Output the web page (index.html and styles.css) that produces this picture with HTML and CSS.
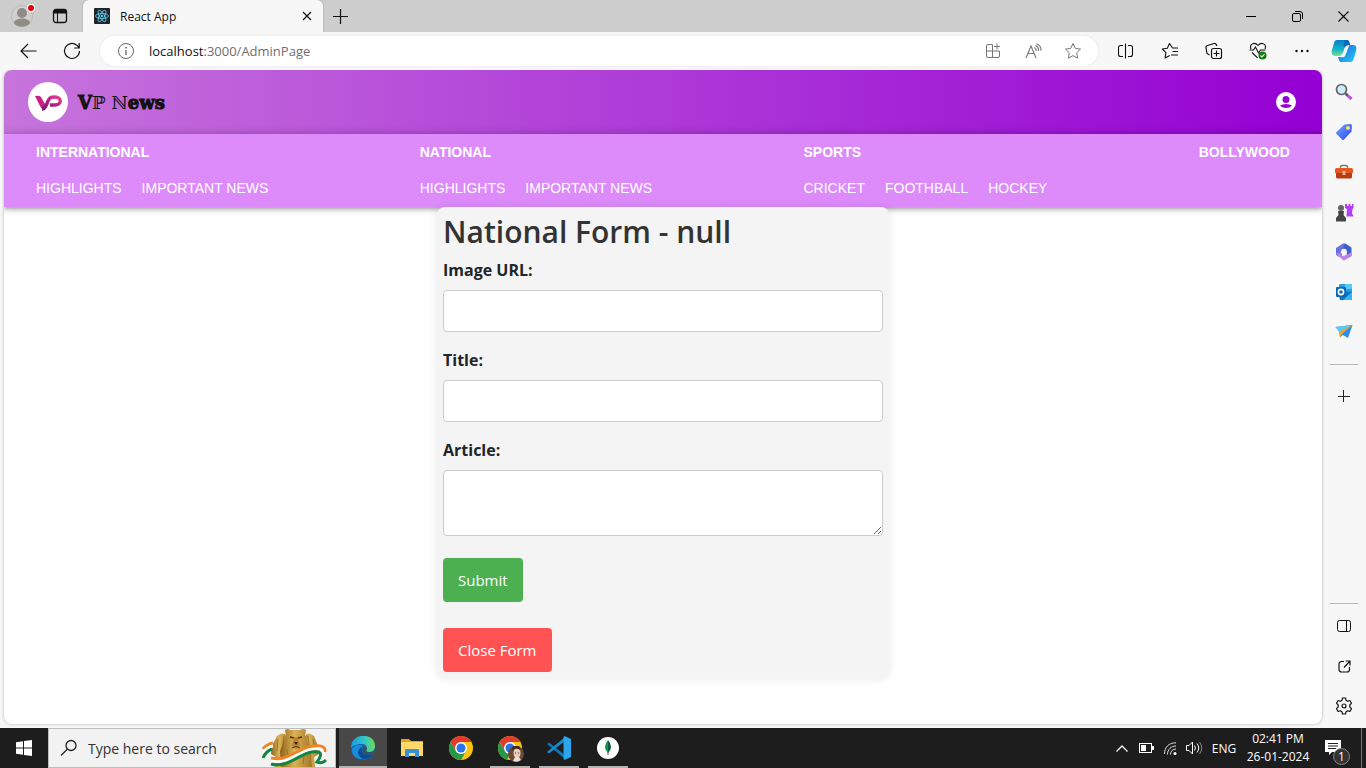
FILE: index.html
```html
<!DOCTYPE html>
<html lang="en">
<head>
<meta charset="utf-8">
<title>React App</title>
<link rel="stylesheet" href="styles.css">
</head>
<body>
<div class="tabstrip">
  <button class="profile" aria-label="Profile">
    <svg width="26" height="26" viewBox="0 0 26 26"><circle cx="13" cy="13" r="10.5" fill="#d2d0ce" stroke="#bdbab6"/><circle cx="13" cy="10" r="5" fill="#8f8b87"/><path d="M5 20c0-6 16-6 16 0-3 5-13 5-16 0z" fill="#8f8b87"/><circle cx="22" cy="5" r="4" fill="#fff"/><circle cx="22" cy="5" r="3" fill="#e3000b"/></svg>
  </button>
  <button class="workspace" aria-label="Tab actions">
    <svg width="16" height="16" viewBox="0 0 16 16"><rect x="1.500" y="1.500" width="13" height="13" rx="2.500" fill="none" stroke="#111" stroke-width="1.300"/><path d="M2 2h12v3.500H2z" fill="#111"/><path d="M5.500 5v9" stroke="#111"/></svg>
  </button>
  <div class="tab">
    <svg width="16" height="16" viewBox="0 0 16 16"><rect width="16" height="16" rx="1" fill="#20232a"/><g fill="none" stroke="#61dafb" stroke-width=".8"><ellipse cx="8" cy="8" rx="6.500" ry="2.500"/><ellipse cx="8" cy="8" rx="6.500" ry="2.500" transform="rotate(60 8 8)"/><ellipse cx="8" cy="8" rx="6.500" ry="2.500" transform="rotate(120 8 8)"/></g><circle cx="8" cy="8" r="1.200" fill="#61dafb"/></svg>
    <span class="tab-title">React App</span>
    <button class="tab-close" aria-label="Close tab"><svg width="10" height="10" viewBox="0 0 10 10"><path d="M1 1l8 8M9 1l-8 8" stroke="#111" stroke-width="1.300"/></svg></button>
  </div>
  <button class="new-tab" aria-label="New tab"><svg width="15" height="15" viewBox="0 0 15 15"><path d="M7.500 0v15M0 7.500h15" stroke="#111" stroke-width="1.200"/></svg></button>
  <div class="window-controls">
    <button aria-label="Minimize"><svg width="10" height="10" viewBox="0 0 10 10"><path d="M0 5.500h10" stroke="#000"/></svg></button>
    <button aria-label="Restore"><svg width="11" height="11" viewBox="0 0 11 11" fill="none" stroke="#000"><rect x=".5" y="2.500" width="8" height="8" rx="1.500"/><path d="M3 .5h5a2.500 2.500 0 0 1 2.500 2.500v5"/></svg></button>
    <button aria-label="Close"><svg width="11" height="11" viewBox="0 0 11 11"><path d="M.5.5l10 10M10.500.5l-10 10" stroke="#000" stroke-width="1.100"/></svg></button>
  </div>
</div>

<div class="toolbar">
  <button class="tool" aria-label="Back"><svg width="17" height="16" viewBox="0 0 17 16" fill="none" stroke="#111" stroke-width="1.200"><path d="M16.500 8H1M8 1L1 8l7 7"/></svg></button>
  <button class="tool" aria-label="Refresh"><svg width="18" height="18" viewBox="0 0 18 18" fill="none" stroke="#111" stroke-width="1.200"><path d="M16.500 9A7.500 7.500 0 1 1 13.800 3.200L16 5.500M16.200 1v5h-5"/></svg></button>
  <div class="address">
    <button class="site-info" aria-label="Site information"><svg width="18" height="18" viewBox="0 0 18 18"><circle cx="9" cy="9" r="7.500" fill="none" stroke="#666"/><path d="M9 8v5" stroke="#666" stroke-width="1.300"/><circle cx="9" cy="5.700" r=".9" fill="#666"/></svg></button>
    <span class="url"><span class="host">localhost</span>:3000/AdminPage</span>
    <button class="addr-btn" aria-label="Apps"><svg width="16" height="16" viewBox="0 0 16 16" fill="none" stroke="#767676"><path d="M7.500 1.500H3A1.500 1.500 0 0 0 1.500 3v10A1.500 1.500 0 0 0 3 14.500h10a1.500 1.500 0 0 0 1.500-1.500V8H1.500M7.500 1.500v13M12 .5v6M9 3.500h6"/></svg></button>
    <button class="addr-btn" aria-label="Read aloud"><svg width="17" height="16" viewBox="0 0 17 16" fill="none" stroke="#767676" stroke-width="1.100"><path d="M1 15L6 3l5 12M3 10.500h6M9.500 4.500q2 1 1.500 3.500M10.500 2.500q3.500 1.500 3 5.500M11.500 .8q5 2 4.500 7"/></svg></button>
    <button class="addr-btn" aria-label="Add favourite"><svg width="18" height="18" viewBox="0 0 18 18" fill="none" stroke="#767676" stroke-linejoin="round"><path d="M9 1.500l2.300 4.900 5.200.7-3.800 3.700 1 5.400L9 13.600l-4.700 2.600 1-5.400L1.500 7.100l5.200-.7z"/></svg></button>
  </div>
  <button class="tool" aria-label="Split screen"><svg width="16" height="16" viewBox="0 0 16 16" fill="none" stroke="#111" stroke-width="1.100"><path d="M7.500 .5v15M5 2.500H2.500A2 2 0 0 0 .5 4.500v7a2 2 0 0 0 2 2H5M10 2.500h2.500a2 2 0 0 1 2 2v7a2 2 0 0 1-2 2H10"/></svg></button>
  <button class="tool" aria-label="Favourites"><svg width="18" height="18" viewBox="0 0 18 18" fill="none" stroke="#111" stroke-width="1.100" stroke-linejoin="round"><path d="M17 6h-5.500L8.500 1.500 6.300 6.200l-5 .8 3.600 3.600-.8 5.400 4.600-2.500M11.500 9.500H17M10 13h7"/></svg></button>
  <button class="tool" aria-label="Collections"><svg width="18" height="18" viewBox="0 0 18 18" fill="none" stroke="#111" stroke-width="1.200"><rect x="6.500" y="6.500" width="10" height="10" rx="2"/><path d="M11.500 8.500v6M8.500 11.500h6M4.500 13L2 11.500 1 6a2 2 0 0 1 1.500-2.500L9 1.500a2 2 0 0 1 2.500 1.500L12 4"/></svg></button>
  <button class="tool" aria-label="Browser essentials"><svg width="18" height="18" viewBox="0 0 18 18" fill="none" stroke="#111" stroke-width="1.100"><path d="M2 7C0 2 5.500-.5 9 3.500 12.500-.5 18 2 16 7M.5 8h4l2-3 3 6 2-3h5M3 10.500l5.500 5.300"/><circle cx="13.500" cy="13.500" r="4" fill="#107c10" stroke="none"/><path d="M11.500 13.500l1.500 1.500 2.500-3" stroke="#fff"/></svg></button>
  <button class="tool" aria-label="Settings and more"><svg width="14" height="4" viewBox="0 0 14 4" fill="#111"><circle cx="1.500" cy="2" r="1.200"/><circle cx="7" cy="2" r="1.200"/><circle cx="12.500" cy="2" r="1.200"/></svg></button>
  <button class="copilot" aria-label="Copilot"><svg width="26" height="24" viewBox="0 0 26 24">
    <defs><linearGradient id="ca" x1="0" y1="0" x2="0" y2="1"><stop stop-color="#087ed0"/><stop offset=".6" stop-color="#15b8c5"/><stop offset="1" stop-color="#82dc92"/></linearGradient><linearGradient id="cb" x1="0" y1="0" x2="1" y2="1"><stop stop-color="#1667d9"/><stop offset="1" stop-color="#28cbfa"/></linearGradient></defs>
    <path d="M7 1h9q2 0 2.500 3L19 6c-4 0-5 1-6 5-2 5-3 6-6 6H4c-3 0-4-3-3-6l2-7c1-3 2-3 4-3z" fill="url(#ca)"/><path d="M14 1h2q2 0 2.500 3L19 6c-4 0-5 1-6 3-1-4 0-6 1-8z" fill="#0869b4"/><path d="M10 23h9c2 0 3-1 4-4l2-7c1-4 0-6-3-6h-3c-1 0-2 1-3 5-2 6-3 7-6 7H7c1 3 1 5 3 5z" fill="url(#cb)"/><path d="M16 7h2l-4 10q-1 2-4 1 2-1 3-5 1-5 3-6z" fill="#f7f7f7"/></svg></button>
</div>

<div class="workarea">
  <div class="page">
    <header class="site-header">
      <a class="brand" href="#">
        <svg width="40" height="40" viewBox="0 0 40 40"><defs><linearGradient id="vp" x1="0" y1="1" x2="1" y2="0"><stop stop-color="#6f1b6d"/><stop offset=".5" stop-color="#b31e84"/><stop offset="1" stop-color="#e8428e"/></linearGradient></defs><circle cx="20" cy="20" r="20" fill="#fff"/><path d="M7 14q4-1 6 1l4 7 1 5q-4 1-6-3z" fill="#c91f88"/><path d="M14 27c4 0 4-4 6-8s3-4 7-4c7 0 7 8 0 8h-5" fill="none" stroke="url(#vp)" stroke-width="3.500"/></svg>
        <span><b>𝕍</b>ℙ ℕ<b>𝕖𝕨𝕤</b></span>
      </a>
      <button class="account" aria-label="Account"><svg width="24" height="24" viewBox="0 0 24 24" fill="#fff"><path d="M12 2a10 10 0 1 0 0 20 10 10 0 0 0 0-20zm0 4a3.500 3.500 0 1 1 0 7 3.500 3.500 0 0 1 0-7zm0 12c-2.500 0-4.700-1-6-2.500C7.500 14.800 9.600 14 12 14s4.500.8 6 1.500A8 8 0 0 1 12 18z"/></svg></button>
    </header>
    <nav class="site-nav">
      <section><a class="topic" href="#">INTERNATIONAL</a><div class="links"><a href="#">HIGHLIGHTS</a><a href="#">IMPORTANT NEWS</a></div></section>
      <section><a class="topic" href="#">NATIONAL</a><div class="links"><a href="#">HIGHLIGHTS</a><a href="#">IMPORTANT NEWS</a></div></section>
      <section><a class="topic" href="#">SPORTS</a><div class="links"><a href="#">CRICKET</a><a href="#">FOOTHBALL</a><a href="#">HOCKEY</a></div></section>
      <section><a class="topic" href="#">BOLLYWOOD</a></section>
    </nav>
    <form class="article-form">
      <h1>National Form - null</h1>
      <label for="image">Image URL:</label>
      <input id="image" type="text">
      <label for="title">Title:</label>
      <input id="title" type="text">
      <label for="article">Article:</label>
      <textarea id="article"></textarea>
      <button class="submit" type="submit">Submit</button>
      <button class="close" type="button">Close Form</button>
    </form>
  </div>
  <aside class="sidebar">
    <button aria-label="Search"><svg width="18" height="18" viewBox="0 0 18 18"><path d="M11 11l5.500 5" stroke="#b84af0" stroke-width="3"/><path d="M10 10l2.500 2.500" stroke="#555" stroke-width="2"/><circle cx="6.500" cy="6.500" r="5" fill="#cdeafa" stroke="#666" stroke-width="1.700"/></svg></button>
    <button aria-label="Shopping"><svg width="18" height="18" viewBox="0 0 18 18"><defs><linearGradient id="tg" x1="0" y1="0" x2="1" y2="1"><stop stop-color="#6aaeff"/><stop offset="1" stop-color="#3340ee"/></linearGradient></defs><path d="M9.500 1.500L15.500 1q1.500 0 1.500 1.500l-.5 6-7.500 8q-1 1-2 0L1.500 11q-1-1 0-2z" fill="url(#tg)"/><circle cx="13" cy="5" r="2" fill="#ffd43b"/><circle cx="13" cy="5" r=".8" fill="#fff"/></svg></button>
    <button aria-label="Tools"><svg width="18" height="16" viewBox="0 0 18 16"><path d="M5.500 5V3q0-1.500 1.500-1.500h4q1.500 0 1.500 1.500v2" fill="none" stroke="#777" stroke-width="1.500"/><rect y="4" width="18" height="5.500" rx="1.500" fill="#e35b20"/><path d="M1 9h16v4q0 1.500-1.500 1.500h-13Q1 14.500 1 13z" fill="#b93b10"/><rect x="7.500" y="7" width="3" height="4" fill="#e9b09a"/></svg></button>
    <button aria-label="Games"><svg width="19" height="19" viewBox="0 0 19 19"><path d="M10 1h2v2h1.500V1h2v2H17V1h1.500v4l-1 1-.5 4 1.500 3.500h-7L12 6l-2-1z" fill="#b43df7"/><circle cx="6" cy="5" r="3" fill="#666"/><path d="M3 8h6l-.5 4 2.500 3v3.500H1V15l2.500-3z" fill="#444"/></svg></button>
    <button aria-label="Microsoft 365"><svg width="18" height="18" viewBox="0 0 18 18"><path d="M8 .5L1 5v7l3 2 3-2V8l3-2.500L14 3 10 .5z" fill="#6872dc"/><path d="M10 .5l6.500 4V13L12 15.500 11.500 7 8 4.500z" fill="#3c62c9"/><path d="M1 11l7 6q1 .5 2 0l6.500-4V9l-5 3-4 1-3.500-3z" fill="#b985e7"/><path d="M7 6l4 .5 1 3.500-3 2-3.500-2z" fill="#f7f7f7"/></svg></button>
    <button aria-label="Outlook"><svg width="18" height="18" viewBox="0 0 18 18"><rect x="4" y="1" width="13" height="9" rx="1" fill="#2a9fe0"/><path d="M10 1h6q1 0 1 1v4h-7z" fill="#57ccf8"/><path d="M3 8l14 1v7q0 1-1 1H5z" fill="#0a74c5"/><path d="M8 17l9-8v7q0 1-1 1z" fill="#35b8f1"/><rect x="1" y="4" width="10" height="10" rx="1" fill="#0867b3"/><circle cx="6" cy="9" r="2.600" fill="none" stroke="#fff" stroke-width="1.600"/></svg></button>
    <button aria-label="Drop"><svg width="18" height="16" viewBox="0 0 18 16"><path d="M.5 3L17.500 1 13 14l-5-3-3 2-.5-5z" fill="#2c8de4"/><path d="M.5 3L17.500 1 4.500 8z" fill="#5bcaf1"/><path d="M17.500 1L7 10l-2 4-1-6z" fill="#f0a329"/></svg></button>
    <hr>
    <button aria-label="Customize"><svg width="12" height="12" viewBox="0 0 12 12"><path d="M5.500 0v12M0 6.500h12" stroke="#222"/></svg></button>
    <div class="spacer"></div>
    <hr class="lower">
    <button aria-label="Hide sidebar"><svg width="14" height="12" viewBox="0 0 14 12" fill="none" stroke="#111"><rect x=".5" y=".5" width="13" height="11" rx="2"/><path d="M9.500 1v10"/></svg></button>
    <button aria-label="Open link"><svg width="13" height="13" viewBox="0 0 13 13" fill="none" stroke="#111" stroke-width="1.200"><path d="M6 1.500H3.500a2.500 2.500 0 0 0-2.500 2.500v5.500A2.500 2.500 0 0 0 3.500 12H9a2.500 2.500 0 0 0 2.500-2.500V7M7.500 1H12v4.500M12 1L6 7.500"/></svg></button>
    <button aria-label="Settings"><svg width="18" height="18" viewBox="0 0 18 18" fill="none" stroke="#111" stroke-linejoin="round" stroke-width="1.200"><circle cx="9" cy="9" r="2"/><path d="M7.500 1h3l.6 2.300 1.500.9 2.300-.7 1.600 2.700L14.800 8v2l1.700 1.700-1.600 2.800-2.300-.7-1.500.9-.6 2.300h-3l-.6-2.300-1.500-.9-2.300.7-1.600-2.800L3.200 10V8L1.500 6.200l1.600-2.700 2.300.7 1.500-.9z"/></svg></button>
  </aside>
</div>

<footer class="taskbar">
  <button class="start" aria-label="Start"><svg width="16" height="16" viewBox="0 0 16 16" fill="#fff"><path d="M0 2.200l7-1v6.300H0zM8 1l8-1v7.500H8zM0 8.500h7v6.300l-7-1zM8 8.500h8V16l-8-1z"/></svg></button>
  <div class="search">
    <svg width="18" height="18" viewBox="0 0 18 18" fill="none" stroke="#222" stroke-width="1.300"><circle cx="11" cy="6.500" r="5"/><path d="M7.500 10L1 16.500"/></svg>
    <input type="text" aria-label="Search" placeholder="Type here to search">
    <svg class="emblem" width="68" height="38" viewBox="0 0 68 38">
      <defs><linearGradient id="gold"><stop stop-color="#8a6420"/><stop offset=".45" stop-color="#dcb254"/><stop offset="1" stop-color="#a2772a"/></linearGradient></defs>
      <path d="M16 7q6-5 10 0l2 31H14l1-10-5-3 1-8z" fill="url(#gold)"/>
      <path d="M53 7q-6-5-9 0l-3 31h13l-1-10 5-3-1-8z" fill="url(#gold)"/>
      <path d="M24 1q3-2 5 0h10q3-2 6 0l-1 6 6 15 1 16H20l-1-16 6-15z" fill="url(#gold)"/>
      <path d="M29 8l4 1M41 8l-4 1" stroke="#4e300d" stroke-width="1.500"/>
      <path d="M33 8h4l2 9-4 3-4-3z" fill="#b9832f"/>
      <path d="M33 13h4l-2 3z" fill="#3a210a"/><path d="M31 19q4-3 8 0" fill="none" stroke="#5c390b"/>
      <path d="M26 20l2 15M44 20l-2 15M17 10l-1 12M52 10l2 12M23 7l-2 16M47 7l2 16" stroke="#8c6119" opacity=".7"/>
      <path d="M2 20q4-5 10-6" fill="none" stroke="#f58220" stroke-width="3"/>
      <path d="M2 24q4-6 10-7" fill="none" stroke="#fff" stroke-width="3"/>
      <path d="M2 29q3-7 9-9" fill="none" stroke="#128543" stroke-width="3"/>
      <path d="M10 29C29 34 41 14 59 17q6 1 5 6" fill="none" stroke="#f58220" stroke-width="3"/>
      <path d="M10 32C29 37 41 17 59 20q5 2 0 8" fill="none" stroke="#fff" stroke-width="3"/>
      <path d="M10 35C29 40 41 20 58 23q4 2-2 10 5 2 9-2" fill="none" stroke="#128543" stroke-width="3"/>
    </svg>
  </div>
  <div class="apps">
    <button class="active" aria-label="Edge"><svg width="24" height="24" viewBox="0 0 24 24"><defs><linearGradient id="ed" x1="0" x2="1"><stop stop-color="#159ee4"/><stop offset=".6" stop-color="#35c7c0"/><stop offset="1" stop-color="#6edb54"/></linearGradient></defs><circle cx="12" cy="12" r="12" fill="#0d64b4"/><path d="M0 12C0-4 24-4 24 10c0 6-6 7-9 5 2-4 0-7-4-7C5 8 1 10 0 12z" fill="url(#ed)"/><path d="M1 13c3-5 10-6 11-1-4 2-3 8 2 10-7 3-14-2-13-9z" fill="#198bdb"/><path d="M12 11c-4 5 3 11 10 7-4 7-14 6-15-1 0-3 2-6 5-6z" fill="#0a4d91"/><path d="M14 10q3 2 1 5 3 3 8 0-1 2-2 3-9 2-9-5 0-2 2-3z" fill="#494949"/></svg></button>
    <button aria-label="File Explorer"><svg width="22" height="20" viewBox="0 0 22 20"><path d="M0 1h8l2 2h12v15H0z" fill="#e8a317"/><path d="M0 4h22v14H0z" fill="#ffda6a"/><path d="M4 19v-7q0-1 1-1h12q1 0 1 1v7h-4v-4H8v4z" fill="#3a91d5"/></svg></button>
    <button aria-label="Chrome"><svg width="24" height="24" viewBox="0 0 24 24"><circle cx="12" cy="12" r="12" fill="#f9c513"/><path d="M1.600 6A12 12 0 0 1 22.400 6H12L6.800 15z" fill="#e33b2e"/><path d="M1.600 6l5.200 9 5.200 3-3 5.600A12 12 0 0 1 1.600 6z" fill="#24984a"/><path d="M12 18l5-3-5 9a12 12 0 0 1-3-.4z" fill="#24984a"/><circle cx="12" cy="12" r="6" fill="#fff"/><circle cx="12" cy="12" r="4.500" fill="#2874e8"/></svg></button>
    <button class="open" aria-label="Chrome profile"><svg width="28" height="28" viewBox="0 0 28 28"><circle cx="14" cy="14" r="12" fill="#f9c513"/><path d="M3.600 8A12 12 0 0 1 24.400 8H14L8.800 17z" fill="#e33b2e"/><path d="M3.600 8l5.200 9 5.200 3-3 5.600A12 12 0 0 1 3.600 8z" fill="#24984a"/><circle cx="14" cy="14" r="6" fill="#fff"/><circle cx="14" cy="14" r="4.500" fill="#2874e8"/><circle cx="20" cy="20" r="8" fill="#6b4a35"/><ellipse cx="21" cy="19" rx="3.500" ry="4.500" fill="#edcdbb"/><path d="M15 18q3-6 10-2l-2-4h-6z" fill="#3e2a20"/><path d="M17 27l2-4h4l2 3q-4 3-8 1z" fill="#e8dfda"/><path d="M19 19h1M22 19h1" stroke="#222"/></svg></button>
    <button class="open" aria-label="Visual Studio Code"><svg width="24" height="24" viewBox="0 0 24 24"><path d="M2 6.500L18 19v4L0 8z" fill="#0d77bd"/><path d="M2 17.500L18 5V1L0 16z" fill="#168bd1"/><path d="M17.500 0L24 3v18l-6.500 3q-1-1-1-2V2q0-1 1-2z" fill="#2aa6ed"/></svg></button>
    <button class="open" aria-label="MongoDB Compass"><svg width="22" height="22" viewBox="0 0 22 22"><circle cx="11" cy="11" r="11" fill="#fff"/><path d="M11 3q-6 7 0 13z" fill="#159657"/><path d="M11 3q6 7 0 13z" fill="#075f3b"/><path d="M11 15v3" stroke="#555"/></svg></button>
  </div>
  <div class="tray">
    <button aria-label="Hidden icons"><svg width="12" height="7" viewBox="0 0 12 7"><path d="M.5 6.500L6 1l5.500 5.500" fill="none" stroke="#fff" stroke-width="1.300"/></svg></button>
    <button aria-label="Battery"><svg width="15" height="10" viewBox="0 0 15 10"><rect x=".5" y=".5" width="12" height="9" fill="none" stroke="#fff"/><path d="M13 3h2v4h-2zM2 2h5v6H2z" fill="#fff"/></svg></button>
    <button aria-label="Network"><svg width="13" height="13" viewBox="0 0 13 13" fill="none" stroke="#ddd"><path d="M.5 12C.5 5 5 .8 12 .8M3.500 12.500c0-5 3.500-8.500 8.500-8.500M6.500 12.500C6.500 9 9 7 12 7"/><circle cx="11" cy="11.500" r="1.500" fill="#fff" stroke="none"/></svg></button>
    <button aria-label="Volume"><svg width="17" height="14" viewBox="0 0 17 14" fill="none" stroke="#fff"><path d="M.5 4.500H3L6.500 1v12L3 9.500H.5zM8.500 4.500q2 2.500 0 5M11 2.500q3.500 4.500 0 9"/><path d="M13.500 1q4.500 6 0 12" stroke="#888"/></svg></button>
    <button class="lang">ENG</button>
    <button class="clock"><span>02:41 PM</span><span>26-01-2024</span></button>
    <button class="notice" aria-label="1 notification"><svg width="16" height="16" viewBox="0 0 16 16"><path d="M0 0h16v12H7l-3 3v-3H0z" fill="#fff"/><path d="M3 3.500h10M3 6h10M3 8.500h8" stroke="#222"/></svg><span class="badge">1</span></button>
  </div>
</footer>
</body>
</html>
```
FILE: styles.css
```css
* { box-sizing: border-box; }
body {
  margin: 0;
  height: 100vh;
  display: flex;
  flex-direction: column;
  overflow: hidden;
  background: #f7f7f7;
  color: #212529;
  font-family: "Segoe UI", "Open Sans", "Noto Sans", sans-serif;
  font-size: 16px;
}
button {
  margin: 0;
  padding: 0;
  border: 0;
  background: none;
  color: inherit;
  font: inherit;
}
a { color: inherit; text-decoration: none; }
svg { display: block; flex: none; }
.tabstrip button, .toolbar button, .sidebar button, .start, .apps button, .tray button {
  display: flex;
  align-items: center;
  justify-content: center;
  flex: none;
}

.tabstrip {
  flex: none;
  height: 32px;
  display: flex;
  align-items: stretch;
  background: #cdcdcd;
}
.profile { width: 44px; }
.workspace { width: 32px; }
.tab {
  width: 240px;
  margin-left: 7px;
  padding: 0 8px 0 11px;
  display: flex;
  align-items: center;
  gap: 10px;
  border-radius: 6px 6px 0 0;
  background: #f7f7f7;
  box-shadow: 0 0 2px #999;
  font-size: 12px;
  color: #111;
}
.tab-title { flex: 1; }
.tab-close { width: 16px; }
.new-tab { width: 34px; }
.window-controls { margin-left: auto; display: flex; }
.window-controls button { width: 46px; }

.toolbar {
  flex: none;
  height: 38px;
  padding: 0 2px 0 6px;
  display: flex;
  align-items: center;
  position: relative;
  background: #f7f7f7;
}
.tool { width: 44px; }
.address {
  flex: 1;
  height: 30px;
  margin: 0 6px;
  padding: 0 5px 0 12px;
  display: flex;
  align-items: center;
  border-radius: 15px;
  background: #fff;
  box-shadow: 0 0 3px #e4e4e4;
}
.site-info { width: 28px; }
.url { flex: 1; padding-left: 9px; font-size: 13px; color: #6f6f6f; }
.host { color: #111; }
.addr-btn { width: 40px; }
.copilot { width: 40px; }

.workarea { flex: 1; min-height: 0; display: flex; }
.page {
  flex: 1;
  margin: 0 0 4px 4px;
  overflow: hidden;
  border-radius: 8px;
  background: #fff;
  box-shadow: 0 0 3px #aaa;
}
.site-header {
  height: 64px;
  padding: 0 24px;
  display: flex;
  align-items: center;
  justify-content: space-between;
  background: linear-gradient(to right, #c774dc, #9400d3);
}
.brand {
  display: flex;
  align-items: center;
  gap: 10px;
  color: #111;
  font-family: "DejaVu Serif", "DejaVu Sans", serif;
  font-size: 18px;
}
.brand b { font-weight: 400; -webkit-text-stroke: 1px #111; }
.site-nav {
  position: relative;
  padding: 0 32px;
  display: flex;
  justify-content: space-between;
  background: #dd8afb;
  box-shadow: 0 2px 4px rgba(0, 0, 0, .3), 0 0 10px rgba(0, 0, 0, .2);
  color: #fff;
  font-family: Arial, "Liberation Sans", sans-serif;
  font-size: 14px;
  line-height: 36px;
}
.site-nav a { display: block; }
.site-nav .topic { font-weight: 700; }
.links { display: flex; gap: 20px; line-height: 37px; }

.article-form {
  position: relative;
  width: 452px;
  max-width: 100%;
  margin: 0 auto;
  padding: 6px;
  display: flex;
  flex-direction: column;
  align-items: flex-start;
  border-radius: 8px;
  background: #f4f4f4;
  box-shadow: 0 0 10px rgba(0, 0, 0, .1);
}
.article-form h1 {
  margin: 0 0 7px;
  font-size: 30px;
  font-weight: 600;
  line-height: 38px;
  color: #333;
}
.article-form label {
  margin-bottom: 8px;
  font-weight: 700;
  line-height: 24px;
}
.article-form input, .article-form textarea {
  width: 100%;
  padding: 8px;
  border: 1px solid #ccc;
  border-radius: 4px;
  background: #fff;
  font: inherit;
}
.article-form input { height: 42px; margin-bottom: 16px; }
.article-form textarea { height: 66px; margin-bottom: 22px; resize: vertical; }
.submit, .close {
  height: 44px;
  padding: 0 15px;
  border-radius: 4px;
  color: #fff;
  font-size: 15px;
}
.submit { margin-bottom: 26px; background: #4caf50; }
.close { background: #ff5252; }

.sidebar {
  flex: none;
  width: 44px;
  padding: 2px 0;
  display: flex;
  flex-direction: column;
  align-items: center;
}
.sidebar button { width: 40px; height: 40px; }
.sidebar hr { width: 28px; margin: 12px 0 11px; border: 0; border-top: 1px solid #b8b8b8; }
.sidebar .lower { margin: 0 0 2px; }
.spacer { flex: 1; }

.taskbar {
  flex: none;
  height: 40px;
  display: flex;
  background: #1d1d1d;
  color: #fff;
}
.start { width: 48px; }
.search {
  width: 288px;
  padding: 0 6px 0 11px;
  display: flex;
  align-items: center;
  border: 1px solid #bdbdbd;
  background: #f2f2f2;
}
.search input {
  flex: 1;
  min-width: 0;
  padding: 0 0 0 10px;
  border: 0;
  background: none;
  font: inherit;
  font-size: 14px;
}
.search input::placeholder { color: #333; opacity: 1; }
.apps { margin-left: 3px; display: flex; gap: 1px; }
.apps button { width: 48px; }
.apps .active {
  background: #484848 linear-gradient(#b5b3ad, #b5b3ad) bottom / 100% 2px no-repeat;
}
.apps .open { background: linear-gradient(#b5b3ad, #b5b3ad) bottom / 40px 2px no-repeat; }
.tray {
  margin-left: auto;
  padding-right: 4px;
  display: flex;
  background: linear-gradient(#777, #777) right 4px top / 1px 100% no-repeat;
  font-size: 12px;
}
.tray button { width: 24px; }
.tray .lang { width: 36px; }
.tray .clock { width: 72px; flex-direction: column; line-height: 18px; }
.tray .notice { width: 48px; position: relative; padding-right: 10px; }
.badge {
  position: absolute;
  right: 12px;
  bottom: 3px;
  width: 17px;
  height: 17px;
  border: 1px solid #888;
  border-radius: 50%;
  background: #333;
  font-size: 12px;
  line-height: 15px;
}
```
